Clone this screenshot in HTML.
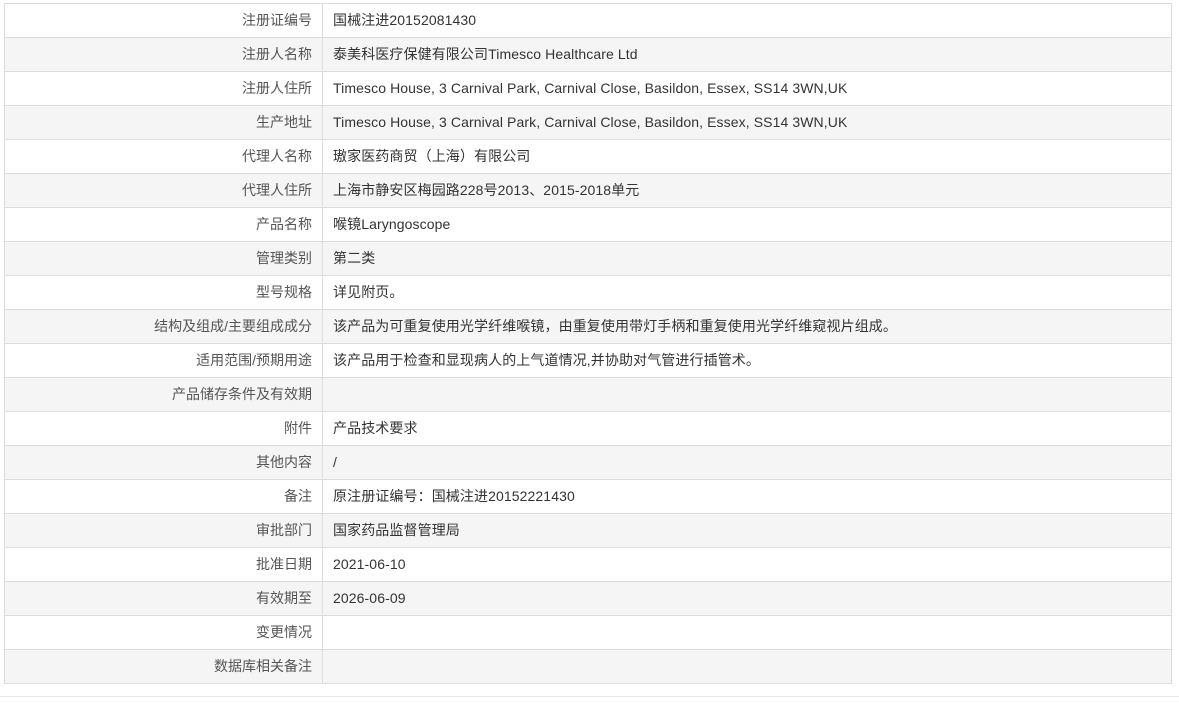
<!DOCTYPE html>
<html><head><meta charset="utf-8"><style>
body{margin:0;background:#fff;width:1179px;height:703px;overflow:hidden;font-family:"Liberation Sans","Noto Sans CJK SC",sans-serif;font-size:14px;color:#333}
table{position:absolute;left:4px;top:3px;width:1168px;border-collapse:collapse;border:1px solid #d5d5d5}
td{height:33px;padding:0;border:1px solid #dcdcdc;line-height:33px;white-space:nowrap}
td.l{width:307px;text-align:right;padding-right:10px;color:#555}
td.v{padding-left:10px;letter-spacing:0.1px}
tr:nth-child(even){background:#f5f5f5}
.bl{position:absolute;left:0;top:696px;width:1179px;height:1px;background:#e8e8e8}
</style></head><body>
<table>
<tr><td class="l">注册证编号</td><td class="v">国械注进20152081430</td></tr>
<tr><td class="l">注册人名称</td><td class="v">泰美科医疗保健有限公司Timesco Healthcare Ltd</td></tr>
<tr><td class="l">注册人住所</td><td class="v">Timesco House, 3 Carnival Park, Carnival Close, Basildon, Essex, SS14 3WN,UK</td></tr>
<tr><td class="l">生产地址</td><td class="v">Timesco House, 3 Carnival Park, Carnival Close, Basildon, Essex, SS14 3WN,UK</td></tr>
<tr><td class="l">代理人名称</td><td class="v">璈家医药商贸（上海）有限公司</td></tr>
<tr><td class="l">代理人住所</td><td class="v">上海市静安区梅园路228号2013、2015-2018单元</td></tr>
<tr><td class="l">产品名称</td><td class="v">喉镜Laryngoscope</td></tr>
<tr><td class="l">管理类别</td><td class="v">第二类</td></tr>
<tr><td class="l">型号规格</td><td class="v">详见附页。</td></tr>
<tr><td class="l">结构及组成/主要组成成分</td><td class="v">该产品为可重复使用光学纤维喉镜，由重复使用带灯手柄和重复使用光学纤维窥视片组成。</td></tr>
<tr><td class="l">适用范围/预期用途</td><td class="v">该产品用于检查和显现病人的上气道情况,并协助对气管进行插管术。</td></tr>
<tr><td class="l">产品储存条件及有效期</td><td class="v"></td></tr>
<tr><td class="l">附件</td><td class="v">产品技术要求</td></tr>
<tr><td class="l">其他内容</td><td class="v">/</td></tr>
<tr><td class="l">备注</td><td class="v">原注册证编号：国械注进20152221430</td></tr>
<tr><td class="l">审批部门</td><td class="v">国家药品监督管理局</td></tr>
<tr><td class="l">批准日期</td><td class="v">2021-06-10</td></tr>
<tr><td class="l">有效期至</td><td class="v">2026-06-09</td></tr>
<tr><td class="l">变更情况</td><td class="v"></td></tr>
<tr><td class="l">数据库相关备注</td><td class="v"></td></tr>
</table>
<div class="bl"></div>
</body></html>
